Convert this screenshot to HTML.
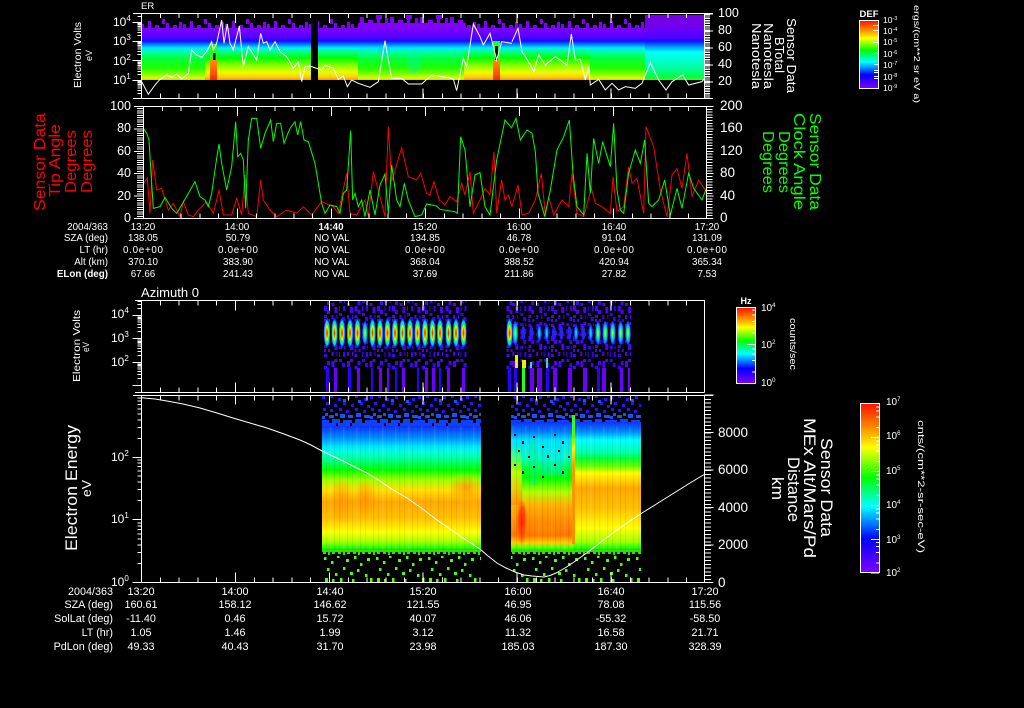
<!DOCTYPE html>
<html><head><meta charset="utf-8"><title>Sensor Data</title>
<style>
html,body{margin:0;padding:0;background:#000;width:1024px;height:708px;overflow:hidden}
svg{display:block}
text{font-family:"Liberation Sans",sans-serif;fill:#fff}
.ax{shape-rendering:crispEdges}
.c text{text-anchor:middle}
.e text{text-anchor:end}
</style></head>
<body>
<svg xmlns="http://www.w3.org/2000/svg" width="1024" height="708" viewBox="0 0 1024 708">
<defs>
<linearGradient id="gA" gradientUnits="userSpaceOnUse" x1="0" y1="0" x2="0" y2="1000">
<stop offset=".028" stop-color="#7f00ff"/><stop offset=".038" stop-color="#5000ff"/><stop offset=".041" stop-color="#1010ff"/><stop offset=".045" stop-color="#0090ff"/><stop offset=".048" stop-color="#00f0ee"/><stop offset=".052" stop-color="#00ff80"/><stop offset=".058" stop-color="#00ff00"/><stop offset=".066" stop-color="#90ff00"/><stop offset=".072" stop-color="#e8ff00"/><stop offset=".077" stop-color="#ffd000"/><stop offset=".080" stop-color="#ff9000"/></linearGradient>
<linearGradient id="gB" gradientUnits="userSpaceOnUse" x1="0" y1="0" x2="0" y2="1000">
<stop offset=".028" stop-color="#7f00ff"/><stop offset=".038" stop-color="#5000ff"/><stop offset=".041" stop-color="#1010ff"/><stop offset=".045" stop-color="#0090ff"/><stop offset=".048" stop-color="#00e8ff"/><stop offset=".052" stop-color="#00ffa0"/><stop offset=".058" stop-color="#00ff40"/><stop offset=".068" stop-color="#20ff00"/><stop offset=".074" stop-color="#80ff00"/><stop offset=".078" stop-color="#d0ff00"/><stop offset=".080" stop-color="#ffc000"/></linearGradient>
<linearGradient id="gC" gradientUnits="userSpaceOnUse" x1="0" y1="0" x2="0" y2="1000">
<stop offset=".020" stop-color="#7f00ff"/><stop offset=".038" stop-color="#5000ff"/><stop offset=".041" stop-color="#1010ff"/><stop offset=".047" stop-color="#00a0ff"/><stop offset=".052" stop-color="#00ffff"/><stop offset=".068" stop-color="#00ffa0"/><stop offset=".077" stop-color="#00ff40"/><stop offset=".080" stop-color="#40ff00"/></linearGradient>
<linearGradient id="gL" gradientUnits="userSpaceOnUse" x1="0" y1="0" x2="0" y2="1000">
<stop offset=".426" stop-color="#1030ff"/><stop offset=".438" stop-color="#0090ff"/><stop offset=".446" stop-color="#00e0ff"/><stop offset=".452" stop-color="#00ffe0"/><stop offset=".462" stop-color="#00ff70"/><stop offset=".470" stop-color="#00ff00"/><stop offset=".480" stop-color="#a0ff00"/><stop offset=".490" stop-color="#ffe000"/><stop offset=".502" stop-color="#ffa800"/><stop offset=".518" stop-color="#ffc000"/><stop offset=".532" stop-color="#ffff00"/><stop offset=".542" stop-color="#a0ff00"/><stop offset=".548" stop-color="#20ff00"/><stop offset=".550" stop-color="#00e000"/></linearGradient>
<linearGradient id="gR1" gradientUnits="userSpaceOnUse" x1="0" y1="0" x2="0" y2="1000">
<stop offset=".422" stop-color="#1030ff"/><stop offset=".432" stop-color="#0080ff"/><stop offset=".440" stop-color="#00e0ff"/><stop offset=".458" stop-color="#00ffc0"/><stop offset=".468" stop-color="#00ff40"/><stop offset=".478" stop-color="#00ff00"/><stop offset=".492" stop-color="#b0ff00"/><stop offset=".505" stop-color="#ffb000"/><stop offset=".520" stop-color="#ff9000"/><stop offset=".535" stop-color="#ff7000"/><stop offset=".543" stop-color="#ffd000"/><stop offset=".547" stop-color="#60ff00"/><stop offset=".550" stop-color="#00ff00"/></linearGradient>
<linearGradient id="gR2" gradientUnits="userSpaceOnUse" x1="0" y1="0" x2="0" y2="1000">
<stop offset=".422" stop-color="#1030ff"/><stop offset=".432" stop-color="#0090ff"/><stop offset=".440" stop-color="#00ffff"/><stop offset=".452" stop-color="#00ffb0"/><stop offset=".458" stop-color="#00ff40"/><stop offset=".466" stop-color="#60ff00"/><stop offset=".473" stop-color="#ffff00"/><stop offset=".488" stop-color="#ffa800"/><stop offset=".508" stop-color="#ffc000"/><stop offset=".528" stop-color="#ffff00"/><stop offset=".542" stop-color="#a0ff00"/><stop offset=".548" stop-color="#20ff00"/><stop offset=".550" stop-color="#00e000"/></linearGradient>
<linearGradient id="cb" x1="0" y1="0" x2="0" y2="1">
<stop offset="0" stop-color="#ff1000"/><stop offset=".13" stop-color="#ff8000"/><stop offset=".26" stop-color="#ffff00"/><stop offset=".44" stop-color="#00ff00"/><stop offset=".61" stop-color="#00ffff"/><stop offset=".80" stop-color="#0000ff"/><stop offset="1" stop-color="#7f00ff"/></linearGradient>
<linearGradient id="hot" x1="0" y1="0" x2="0" y2="1">
<stop offset="0" stop-color="#ff9000"/><stop offset=".7" stop-color="#ff5000"/><stop offset="1" stop-color="#ff2000"/></linearGradient>
<linearGradient id="fadeO" x1="0" y1="0" x2="0" y2="1">
<stop offset="0" stop-color="#a0ff00" stop-opacity="0"/><stop offset=".45" stop-color="#e0ff00" stop-opacity=".8"/><stop offset="1" stop-color="#ff9000"/></linearGradient>
<linearGradient id="stripe" x1="0" y1="0" x2="0" y2="1">
<stop offset="0" stop-color="#20ff40"/><stop offset=".17" stop-color="#60ff00"/><stop offset=".25" stop-color="#ffff00"/><stop offset=".4" stop-color="#ffa000"/><stop offset="1" stop-color="#ff9000"/></linearGradient>
<radialGradient id="pu">
<stop offset="0" stop-color="#ff0000"/><stop offset=".28" stop-color="#ff9000"/><stop offset=".45" stop-color="#e0ff00"/><stop offset=".6" stop-color="#00ff40"/><stop offset=".75" stop-color="#00e0ff"/><stop offset=".9" stop-color="#0040ff"/><stop offset="1" stop-color="#3000ff"/></radialGradient>
<radialGradient id="pw">
<stop offset="0" stop-color="#00ffb0"/><stop offset=".4" stop-color="#00b0ff"/><stop offset=".75" stop-color="#0040ff"/><stop offset="1" stop-color="#3000ff"/></radialGradient>
<radialGradient id="pg">
<stop offset="0" stop-color="#d0ff00"/><stop offset=".35" stop-color="#20ff60"/><stop offset=".7" stop-color="#00a0ff"/><stop offset="1" stop-color="#3000ff"/></radialGradient>
<radialGradient id="rd"><stop offset="0" stop-color="#ff2000"/><stop offset=".6" stop-color="#ff5000"/><stop offset="1" stop-color="#ff8000" stop-opacity="0"/></radialGradient>
<radialGradient id="or"><stop offset="0" stop-color="#ff9000" stop-opacity=".75"/><stop offset="1" stop-color="#ff9000" stop-opacity="0"/></radialGradient>
<pattern id="sP" patternUnits="userSpaceOnUse" width="42" height="15" x="141" y="13">
<rect x="0" y="11" width="3" height="4" fill="#7f00ff"/><rect x="7" y="8" width="3" height="7" fill="#7f00ff"/><rect x="14" y="12" width="4" height="3" fill="#7f00ff"/><rect x="21" y="6" width="3" height="5" fill="#7f00ff"/><rect x="25" y="10" width="3" height="5" fill="#7f00ff"/><rect x="32" y="12" width="4" height="3" fill="#7f00ff"/><rect x="38" y="9" width="3" height="6" fill="#7f00ff"/></pattern>
<pattern id="sQ" patternUnits="userSpaceOnUse" width="30" height="14" x="358" y="14">
<rect x="0" y="9" width="30" height="5" fill="#7f00ff"/><rect x="2" y="3" width="4" height="6" fill="#7f00ff"/><rect x="10" y="6" width="5" height="3" fill="#7f00ff"/><rect x="18" y="1" width="6" height="4" fill="#7f00ff"/><rect x="19" y="5" width="3" height="4" fill="#7f00ff"/><rect x="27" y="4" width="3" height="5" fill="#7f00ff"/></pattern>
<pattern id="sB" patternUnits="userSpaceOnUse" width="48" height="33" x="322" y="395">
<path fill="#2a10ff" d="M0 1h3v3h-3zM8 0h3v3h-3zM16 3h3v3h-3zM25 1h3v3h-3zM33 0h3v3h-3zM42 3h3v3h-3zM4 7h3v3h-3zM12 9h3v3h-3zM21 7h3v3h-3zM29 9h3v3h-3zM38 7h3v3h-3zM45 10h3v3h-3zM1 13h3v3h-3zM8 14h3v3h-3zM17 13h3v3h-3zM24 15h3v3h-3zM33 13h3v3h-3zM41 15h3v3h-3z"/>
<path fill="#1850ff" d="M3 18h3v3h-3zM7 20h5v3h-5zM13 18h3v3h-3zM18 19h5v4h-5zM26 20h5v3h-5zM34 18h5v4h-5zM42 20h6v3h-6zM0 21h3v3h-3zM21 4h3v3h-3zM36 5h3v3h-3z"/>
<path fill="#1040ff" d="M0 25h7v3h-7zM10 24h8v4h-8zM21 25h9v3h-9zM33 24h7v4h-7zM43 25h5v3h-5zM0 28h14v5h-14zM16 28h12v5h-12zM30 28h18v5h-18z"/></pattern>
<pattern id="sG" patternUnits="userSpaceOnUse" width="52" height="32" x="322" y="550">
<path fill="#50ff00" d="M2 7h2.5v3h-2.5zM9 11h2.5v3h-2.5zM15 5h2.5v3h-2.5zM24 9h3v3h-3zM32 6h2.5v3h-2.5zM38 13h2.5v3h-2.5zM45 8h3v3h-3zM5 18h2.5v3h-2.5zM13 23h2.5v3h-2.5zM21 17h2.5v3h-2.5zM28 22h3v3h-3zM35 19h2.5v3h-2.5zM43 24h2.5v3h-2.5zM3 28h3v4h-3zM18 28h2.5v4h-2.5zM30 29h2.5v3h-2.5zM48 28h2.5v4h-2.5zM10 29h2.5v3h-2.5z"/></pattern>
<pattern id="sD" patternUnits="userSpaceOnUse" width="15" height="6" x="322" y="550">
<path fill="#30e000" d="M0 0h15v2h-15zM1 2h3v2h-3zM6 2h2v3h-2zM10 2h3v2h-3z"/></pattern>
<pattern id="n1" patternUnits="userSpaceOnUse" width="6" height="30" x="0" y="301">
<path fill="#4a00ff" d="M0 0h3v4h-3zM3 5h3v5h-3zM0 9h3v4h-3zM3 14h3v3h-3zM1 18h4v3h-4zM3 23h3v3h-3z"/></pattern>
<pattern id="n2" patternUnits="userSpaceOnUse" width="6" height="37" x="0" y="303">
<path fill="#5000ff" d="M3 0h3v3h-3zM0 4h3v6h-3zM2 12h3v4h-3zM0 19h3v3h-3zM3 21h3v6h-3zM0 30h4v3h-4z"/></pattern>
<pattern id="n3" patternUnits="userSpaceOnUse" width="6" height="23" x="0" y="306">
<path fill="#3c00ff" d="M1 0h3v5h-3zM3 7h3v3h-3zM0 11h3v4h-3zM2 17h4v3h-4z"/></pattern>
<pattern id="sK" patternUnits="userSpaceOnUse" width="40" height="30" x="511" y="432">
<path fill="#000" d="M3 2h2v2h-2zM11 9h2v3h-2zM22 4h2v2h-2zM31 14h2v2h-2zM7 18h2v2h-2zM17 24h2v2h-2zM36 23h2v3h-2z"/></pattern>
<pattern id="st" patternUnits="userSpaceOnUse" width="13" height="10">
<rect x="1" width="1.2" height="10" fill="#000" opacity=".06"/><rect x="5" width="1.5" height="10" fill="#fff" opacity=".08"/><rect x="9" width="1.2" height="10" fill="#000" opacity=".07"/></pattern>
<path id="lt" d="M-4 -30.1h4M-4 -47.7h4M-4 -60.2h4M-4 -69.9h4M-4 -77.8h4M-4 -84.5h4M-4 -90.3h4M-4 -95.4h4M-9 0h9" fill="none" stroke="#fff" vector-effect="non-scaling-stroke"/>
<path id="lc" d="M-3 -30.1h3M-3 -60.2h3M-3 -77.8h3M-3 -90.3h3M-8 0h8" fill="none" stroke="#fff" vector-effect="non-scaling-stroke"/>
<clipPath id="c1"><rect x="120" y="13" width="30" height="86"/></clipPath>
<clipPath id="c3"><rect x="120" y="300" width="30" height="93"/></clipPath>
<clipPath id="c4"><rect x="120" y="395" width="30" height="188"/></clipPath>
<g id="n1r"><rect x="-3" y="301" width="6" height="68" fill="url(#n1)"/></g>
<g id="n2r"><rect x="-3" y="301" width="6" height="68" fill="url(#n2)"/></g>
<g id="n3r"><rect x="-3" y="301" width="6" height="68" fill="url(#n3)"/></g>
<ellipse id="P" cx="0" cy="333" rx="3.2" ry="15" fill="url(#pu)"/>
<ellipse id="W" cx="0" cy="333" rx="2.2" ry="9" fill="url(#pw)"/>
<ellipse id="V" cx="0" cy="333" rx="2.8" ry="12" fill="url(#pg)"/>
<ellipse id="B" cx="0" cy="333" rx="2" ry="7" fill="#2a20ff"/>
</defs>
<rect width="1024" height="708" fill="#000"/>

<!-- panel 1 spectrogram -->
<rect x="141" y="13" width="170" height="15" fill="url(#sP)"/>
<rect x="318" y="13" width="40" height="15" fill="url(#sP)"/>
<rect x="358" y="14" width="108" height="14" fill="url(#sQ)"/>
<rect x="466" y="13" width="179" height="15" fill="url(#sP)"/>
<rect x="645" y="15" width="59" height="13" fill="#7f00ff" opacity=".9"/>
<rect x="141" y="28" width="64" height="52" fill="url(#gB)"/>
<rect x="205" y="28" width="106" height="52" fill="url(#gA)"/>
<rect x="318" y="28" width="40" height="52" fill="url(#gA)"/>
<rect x="358" y="28" width="106" height="52" fill="url(#gB)"/>
<rect x="464" y="28" width="126" height="52" fill="url(#gA)"/>
<rect x="590" y="28" width="55" height="52" fill="url(#gB)"/>
<rect x="645" y="28" width="59" height="52" fill="url(#gC)"/>
<ellipse cx="414" cy="62" rx="7" ry="12" fill="#00f0c0" opacity=".35"/>
<ellipse cx="384" cy="50" rx="6" ry="5" fill="#00c0ff" opacity=".4"/>
<rect x="210" y="44" width="7" height="16" fill="#20ff20"/>
<rect x="210" y="60" width="7" height="20" fill="url(#hot)"/>
<rect x="213" y="53" width="2.5" height="7" fill="#000"/>
<rect x="493" y="41" width="7" height="19" fill="#20ff20"/>
<rect x="493" y="60" width="7" height="20" fill="url(#hot)"/>
<rect x="495" y="46" width="3" height="14" fill="#000"/>
<g fill="none" stroke="#fff" stroke-width="1">
<polyline vector-effect="non-scaling-stroke" transform="scale(.33333)" points="425,245 445,283 465,255 480,238 500,225 515,232 530,222 545,237 565,220 575,150 590,165 605,172 620,155 635,125 640,150 650,130 665,60 672,130 682,72 690,130 700,150 718,78 730,200 745,140 770,180 782,100 790,130 800,125 810,150 825,125 840,155 860,170 880,205 895,185 905,245 915,200 935,200 965,210 975,195 1000,205 1015,238 1030,228 1042,260 1055,240 1075,250 1110,262 1135,245 1155,122 1175,235 1205,235 1225,252 1265,252 1295,225 1340,232 1360,237 1370,272 1390,175 1400,200 1420,72 1440,110 1450,135 1470,100 1490,180 1505,125 1536,130"/>
<polyline vector-effect="non-scaling-stroke" transform="translate(512,0) scale(.33333)" points="0,125 18,85 30,155 45,178 65,215 80,165 100,195 130,170 165,195 178,102 190,180 205,178 220,240 230,200 235,255 260,238 280,270 300,250 320,270 340,260 370,265 390,250 415,188 440,240 462,270 480,245 512,225 530,255 570,245 578,235"/>
</g>

<!-- panel 2 lines -->
<g fill="none" stroke-width="1">
<polyline stroke="#ff0000" vector-effect="non-scaling-stroke" transform="translate(0,100) scale(.33333)" points="430,250 442,235 450,340 458,180 470,270 485,265 505,330 520,310 540,350 550,305 565,345 580,350 595,330 620,305 640,340 657,270 670,345 695,345 710,295 725,345 735,225 745,340 770,350 782,240 790,300 810,330 830,350 860,330 890,340 910,320 935,345 965,305 1000,320 1015,340 1040,220 1050,340 1070,345 1095,300 1105,350 1120,215 1140,290 1155,350 1165,80 1175,245 1205,143 1225,230 1250,240 1262,220 1280,280 1290,285 1302,245 1318,300 1335,315 1350,290 1370,305 1385,250 1395,285 1410,215 1420,340 1440,300 1455,265 1470,285 1482,155 1490,340 1505,240 1515,300 1525,285 1536,320"/>
<polyline stroke="#ff0000" vector-effect="non-scaling-stroke" transform="translate(512,100) scale(.33333)" points="0,320 18,255 30,345 50,340 70,300 88,220 100,345 110,290 125,345 150,300 170,320 180,220 195,340 215,350 238,265 250,310 270,320 295,340 303,230 315,335 335,320 350,200 360,250 375,235 395,340 402,80 425,140 445,270 465,350 480,225 495,205 510,265 525,160 540,290 560,240 583,275"/>
<polyline stroke="#00ff00" vector-effect="non-scaling-stroke" transform="translate(0,100) scale(.33333)" points="430,85 440,100 447,120 453,220 460,325 480,320 495,292 515,325 530,340 545,315 565,280 585,245 600,290 615,300 625,320 635,280 650,175 657,132 665,190 680,270 695,200 707,65 713,170 722,160 730,180 737,325 745,120 755,55 770,55 782,145 795,100 812,60 820,125 830,70 842,70 852,130 870,85 885,65 893,105 902,65 912,120 925,125 945,190 965,310 975,340 990,315 1010,320 1020,340 1030,280 1040,270 1052,92 1058,300 1065,280 1075,320 1085,300 1095,350 1110,270 1125,345 1140,255 1155,222 1165,340 1175,195 1190,300 1200,320 1213,250 1225,300 1245,350 1265,345 1280,312 1310,318 1320,328 1365,335 1372,340 1382,110 1395,150 1410,320 1425,225 1440,218 1455,320 1470,345 1490,180 1515,60 1536,85"/>
<polyline stroke="#00ff00" vector-effect="non-scaling-stroke" transform="translate(512,100) scale(.33333)" points="0,80 12,55 25,120 45,90 60,100 70,155 78,280 90,320 98,350 115,270 135,150 155,110 172,60 183,220 195,320 215,345 225,160 235,280 245,115 260,190 272,125 295,200 305,70 315,270 325,330 335,340 350,220 370,150 385,190 398,120 410,310 420,320 440,300 458,240 475,345 495,265 510,325 530,220 545,265 570,300 583,265"/>
</g>

<!-- panel 3 pulses -->
<g transform="translate(327,0)"><use href="#n1r"/><use href="#P"/></g>
<g transform="translate(334.5,0)"><use href="#n2r"/><use href="#P"/></g>
<g transform="translate(342,0)"><use href="#n3r"/><use href="#P"/></g>
<g transform="translate(350,0)"><use href="#n2r"/><use href="#P"/></g>
<g transform="translate(357.5,0)"><use href="#n1r"/><use href="#P"/></g>
<g transform="translate(365,0)"><use href="#n3r"/><use href="#V"/></g>
<g transform="translate(372.5,0)"><use href="#n2r"/><use href="#P"/></g>
<g transform="translate(380,0)"><use href="#n1r"/><use href="#P"/></g>
<g transform="translate(387.5,0)"><use href="#n3r"/><use href="#P"/></g>
<g transform="translate(395,0)"><use href="#n1r"/><use href="#P"/></g>
<g transform="translate(402.5,0)"><use href="#n2r"/><use href="#P"/></g>
<g transform="translate(410,0)"><use href="#n3r"/><use href="#P"/></g>
<g transform="translate(417.5,0)"><use href="#n2r"/><use href="#P"/></g>
<g transform="translate(425,0)"><use href="#n1r"/><use href="#P"/></g>
<g transform="translate(432.5,0)"><use href="#n3r"/><use href="#P"/></g>
<g transform="translate(440,0)"><use href="#n2r"/><use href="#P"/></g>
<g transform="translate(448.5,0)"><use href="#n1r"/><use href="#P"/></g>
<g transform="translate(456,0)"><use href="#n2r"/><use href="#P"/></g>
<g transform="translate(463.5,0)"><use href="#n3r"/><use href="#P"/></g>
<g transform="translate(509.5,0)"><use href="#n1r"/><use href="#P"/></g>
<g transform="translate(515.3,0)"><use href="#n2r"/><use href="#V"/></g>
<g transform="translate(523.3,0)"><use href="#n3r"/><use href="#B"/></g>
<g transform="translate(531.3,0)"><use href="#n1r"/><use href="#B"/></g>
<g transform="translate(539.3,0)"><use href="#n2r"/><use href="#W"/></g>
<g transform="translate(546.7,0)"><use href="#n3r"/><use href="#W"/></g>
<g transform="translate(554,0)"><use href="#n1r"/><use href="#B"/></g>
<g transform="translate(561.3,0)"><use href="#n2r"/><use href="#B"/></g>
<g transform="translate(569.3,0)"><use href="#n3r"/><use href="#B"/></g>
<g transform="translate(576,0)"><use href="#n1r"/><use href="#W"/></g>
<g transform="translate(583.3,0)"><use href="#n2r"/><use href="#B"/></g>
<g transform="translate(590.7,0)"><use href="#n3r"/><use href="#W"/></g>
<g transform="translate(598,0)"><use href="#n1r"/><use href="#V"/></g>
<g transform="translate(605.3,0)"><use href="#n2r"/><use href="#V"/></g>
<g transform="translate(612.7,0)"><use href="#n3r"/><use href="#V"/></g>
<g transform="translate(620.7,0)"><use href="#n1r"/><use href="#V"/></g>
<g transform="translate(628,0)"><use href="#n2r"/><use href="#V"/></g>
<g class="ax">
<path fill="#2a00ff" d="M326 368h3v24h-3zM348 368h3v24h-3zM371 368h2v24h-2zM395 368h2v24h-2zM417 368h2v24h-2zM439 368h2v24h-2zM508 368h3v24h-3zM514 368h3v24h-3zM546 368h3v24h-3zM597 368h3v24h-3z"/>
<path fill="#6a00ff" d="M334 368h3v24h-3zM357 368h3v24h-3zM379 368h3v24h-3zM387 368h2v24h-2zM402 368h3v24h-3zM425 368h3v24h-3zM432 368h3v24h-3zM447 368h3v24h-3zM462 368h3v24h-3zM530 368h4v24h-4zM537 368h5v24h-5zM553 368h4v24h-4zM568 368h4v24h-4zM583 368h4v24h-4zM602 368h4v24h-4zM620 368h3v24h-3zM628 368h2v24h-2z"/>
<path fill="#20ff20" d="M522 368h3v24h-3z"/>
<path fill="#e8f000" d="M515 355h3v13h-3zM522 360h4v8h-4z"/>
<path fill="#30e0a0" d="M530 362h2v6h-2zM546 358h2v10h-2z"/>
</g>

<!-- panel 4 spectrogram -->
<rect x="322" y="395" width="159" height="33" fill="url(#sB)"/>
<rect x="322" y="426" width="159" height="124" fill="url(#gL)"/>
<ellipse cx="342" cy="501" rx="12" ry="25" fill="url(#or)"/><ellipse cx="365" cy="498" rx="12" ry="20" fill="url(#or)"/><ellipse cx="466" cy="488" rx="18" ry="14" fill="url(#or)"/>
<rect x="511" y="395" width="130" height="33" fill="url(#sB)"/>
<rect x="511" y="422" width="63" height="128" fill="url(#gR1)"/>
<rect x="574" y="422" width="67" height="128" fill="url(#gR2)"/>
<rect x="511" y="445" width="11" height="60" fill="url(#fadeO)"/>
<rect x="530" y="440" width="8" height="45" fill="#00f090" opacity=".35"/>
<rect x="541" y="445" width="22" height="30" fill="#00e0ff" opacity=".35"/>
<rect x="511" y="432" width="63" height="46" fill="url(#sK)"/>
<ellipse cx="522" cy="522" rx="6" ry="24" fill="url(#rd)"/>
<ellipse cx="545" cy="528" rx="24" ry="12" fill="url(#or)"/>
<rect x="572" y="415" width="3" height="129" fill="url(#stripe)"/>
<rect x="322" y="426" width="159" height="124" fill="url(#st)"/>
<rect x="511" y="426" width="130" height="124" fill="url(#st)"/>
<rect x="322" y="550" width="159" height="6" fill="url(#sD)"/>
<rect x="511" y="550" width="130" height="6" fill="url(#sD)"/>
<rect x="322" y="556" width="159" height="26" fill="url(#sG)"/>
<rect x="511" y="556" width="130" height="26" fill="url(#sG)"/>
<polyline fill="none" stroke="#fff" stroke-width="1" points="141.7,397.7 155,399 167,401 183,404 200,408 217,413 233,418 250,423 267,428 284,434 300,440 311,445 322,451 343,461 355,467 367,473 380,481 393,490 407,498 420,507 433,517 447,527 463,538 480,549 488,556 497,563 506,568 515,572 524,575 532,576 544,577 550,575.5 556,573 565,568 574,562 588,552 601,542 621,527 642,513 658,503 674,493 690,483 705,474"/>

<!-- axes -->
<g class="ax" fill="none" stroke="#fff" stroke-width="1">
<!-- p1 -->
<path d="M133 13.5H713M133 98.5H713M141.5 13V98M704.5 13V98"/>
<line x1="141" x2="705" y1="15.5" y2="15.5" stroke-width="5" stroke-dasharray="1 17.8"/>
<line x1="141" x2="705" y1="18" y2="18" stroke-width="10" stroke-dasharray="1 92.9"/>
<line x1="141" x2="705" y1="96" y2="96" stroke-width="5" stroke-dasharray="1 17.8"/>
<line x1="141" x2="705" y1="93.5" y2="93.5" stroke-width="10" stroke-dasharray="1 92.9"/>
<line x1="707.5" x2="707.5" y1="13" y2="98" stroke-width="5" stroke-dasharray="1 .7"/>
<line x1="709" x2="709" y1="13.5" y2="98" stroke-width="8" stroke-dasharray="1 16"/>
<!-- p2 -->
<path d="M134 106.5H713M134 218.5H713M143.5 106V218M706.5 106V218"/>
<line x1="143" x2="707" y1="108.5" y2="108.5" stroke-width="5" stroke-dasharray="1 17.8"/>
<line x1="143" x2="707" y1="111" y2="111" stroke-width="10" stroke-dasharray="1 93"/>
<line x1="143" x2="707" y1="216" y2="216" stroke-width="5" stroke-dasharray="1 17.8"/>
<line x1="143" x2="707" y1="213.5" y2="213.5" stroke-width="10" stroke-dasharray="1 93"/>
<line x1="140" x2="140" y1="106" y2="218" stroke-width="6" stroke-dasharray="1 1.24"/>
<line x1="138.5" x2="138.5" y1="106" y2="218.5" stroke-width="9" stroke-dasharray="1 21.4"/>
<line x1="709.5" x2="709.5" y1="106" y2="218" stroke-width="6" stroke-dasharray="1 1.8"/>
<line x1="710" x2="710" y1="106" y2="218.5" stroke-width="7" stroke-dasharray="1 21.4"/>
<!-- p3 -->
<path d="M135 300.5H704.5M135 392.5H704.5M141.5 300V392M704.5 300V392"/>
<line x1="141" x2="705" y1="303" y2="303" stroke-width="5" stroke-dasharray="1 17.8"/>
<line x1="141" x2="705" y1="305.5" y2="305.5" stroke-width="10" stroke-dasharray="1 92.9"/>
<line x1="141" x2="705" y1="390" y2="390" stroke-width="5" stroke-dasharray="1 17.8"/>
<line x1="141" x2="705" y1="387.5" y2="387.5" stroke-width="10" stroke-dasharray="1 92.9"/>
<!-- p4 -->
<path d="M133 395.5H713M133 582.5H713M141.5 395V582M704.5 395V582"/>
<line x1="141" x2="705" y1="398" y2="398" stroke-width="5" stroke-dasharray="1 17.8"/>
<line x1="141" x2="705" y1="400" y2="400" stroke-width="9" stroke-dasharray="1 92.9"/>
<line x1="141" x2="705" y1="580" y2="580" stroke-width="5" stroke-dasharray="1 17.8"/>
<line x1="141" x2="705" y1="577.5" y2="577.5" stroke-width="10" stroke-dasharray="1 92.9"/>
<line x1="708" x2="708" y1="395" y2="582.5" stroke-width="6" stroke-dasharray="1 2.75"/>
<line x1="709" x2="709" y1="394.5" y2="582.5" stroke-width="9" stroke-dasharray="1 36.5"/>
</g>
<g class="ax">
<g clip-path="url(#c1)">
<use href="#lt" transform="translate(141.5,99.5) scale(1,.193)"/><use href="#lt" transform="translate(141.5,80.5) scale(1,.193)"/><use href="#lt" transform="translate(141.5,60.5) scale(1,.193)"/><use href="#lt" transform="translate(141.5,41.5) scale(1,.193)"/><use href="#lt" transform="translate(141.5,22.5) scale(1,.193)"/>
</g>
<g clip-path="url(#c3)">
<use href="#lt" transform="translate(141.5,385.5) scale(1,.235)"/><use href="#lt" transform="translate(141.5,362.5) scale(1,.235)"/><use href="#lt" transform="translate(141.5,338.5) scale(1,.235)"/><use href="#lt" transform="translate(141.5,315.5) scale(1,.235)"/>
</g>
<g clip-path="url(#c4)">
<use href="#lt" transform="translate(141.5,582.5) scale(1,.625)"/><use href="#lt" transform="translate(141.5,519.5) scale(1,.625)"/><use href="#lt" transform="translate(141.5,457.5) scale(1,.625)"/>
</g>
</g>

<!-- colour bars -->
<rect x="859.5" y="20.5" width="19" height="68" fill="url(#cb)" stroke="#fff"/>
<rect x="736.5" y="307.5" width="19" height="76" fill="url(#cb)" stroke="#fff"/>
<rect x="860.5" y="403.5" width="19" height="169" fill="url(#cb)" stroke="#fff"/>
<g class="ax">
<path fill="none" stroke="#fff" d="M873 25.5h5M873 30.5h5M873 42.5h5M874 53.5h4M874 64.5h4M874 70.5h4M874 72.5h4M874 76.5h4M874 78.5h4"/>
<use href="#lc" transform="translate(755,344.5) scale(1,.38)"/><use href="#lc" transform="translate(755,383.5) scale(1,.38)"/>
<use href="#lc" transform="translate(879,437.5) scale(1,.34)"/><use href="#lc" transform="translate(879,471.5) scale(1,.34)"/><use href="#lc" transform="translate(879,505.5) scale(1,.34)"/><use href="#lc" transform="translate(879,539.5) scale(1,.34)"/><use href="#lc" transform="translate(879,573) scale(1,.34)"/>
</g>

<!-- tick labels -->
<g font-size="12">
<text x="113" y="26">10<tspan font-size="8" dy="-5">4</tspan></text>
<text x="113" y="45">10<tspan font-size="8" dy="-5">3</tspan></text>
<text x="113" y="65">10<tspan font-size="8" dy="-5">2</tspan></text>
<text x="113" y="84">10<tspan font-size="8" dy="-5">1</tspan></text>
<text x="111" y="318">10<tspan font-size="8" dy="-5">4</tspan></text>
<text x="111" y="342">10<tspan font-size="8" dy="-5">3</tspan></text>
<text x="111" y="366">10<tspan font-size="8" dy="-5">2</tspan></text>
<text x="111" y="461">10<tspan font-size="8" dy="-5">2</tspan></text>
<text x="111" y="523">10<tspan font-size="8" dy="-5">1</tspan></text>
<text x="111" y="586">10<tspan font-size="8" dy="-5">0</tspan></text>
</g>
<g class="e" font-size="12.5">
<text x="131" y="110">100</text><text x="131" y="132">80</text><text x="131" y="155">60</text><text x="131" y="177">40</text><text x="131" y="200">20</text><text x="131" y="222">0</text>
</g>
<g font-size="12.5">
<text x="718" y="17">100</text><text x="718" y="34">80</text><text x="718" y="51">60</text><text x="718" y="68">40</text><text x="718" y="85">20</text>
</g>
<g font-size="13.5">
<text x="720" y="110">200</text><text x="720" y="132">160</text><text x="720" y="155">120</text><text x="720" y="177">80</text><text x="720" y="200">40</text><text x="720" y="222">0</text>
<text x="718" y="437">8000</text><text x="718" y="474">6000</text><text x="718" y="512">4000</text><text x="718" y="549">2000</text><text x="718" y="587">0</text>
</g>

<!-- top colourbar labels -->
<text x="869" y="17" font-size="9.5" font-weight="bold" text-anchor="middle">DEF</text>
<g font-size="8.5">
<text x="883" y="23">10<tspan font-size="5.5" dy="-3">-3</tspan></text>
<text x="883" y="34">10<tspan font-size="5.5" dy="-3">-4</tspan></text>
<text x="883" y="45">10<tspan font-size="5.5" dy="-3">-5</tspan></text>
<text x="883" y="57">10<tspan font-size="5.5" dy="-3">-6</tspan></text>
<text x="883" y="68">10<tspan font-size="5.5" dy="-3">-7</tspan></text>
<text x="883" y="80">10<tspan font-size="5.5" dy="-3">-8</tspan></text>
<text x="883" y="91">10<tspan font-size="5.5" dy="-3">-9</tspan></text>
</g>
<text transform="translate(914,5) rotate(90)" font-size="8.5" textLength="98" lengthAdjust="spacingAndGlyphs">ergs/(cm**2 sr eV a)</text>
<!-- mid colourbar labels -->
<text x="746" y="304" font-size="9" font-weight="bold" text-anchor="middle">Hz</text>
<g font-size="10">
<text x="761" y="311">10<tspan font-size="6" dy="-4">4</tspan></text>
<text x="761" y="348">10<tspan font-size="6" dy="-4">2</tspan></text>
<text x="761" y="386">10<tspan font-size="6" dy="-4">0</tspan></text>
</g>
<text transform="translate(790,318) rotate(90)" font-size="9" textLength="52" lengthAdjust="spacingAndGlyphs">counts/sec</text>
<!-- bottom colourbar labels -->
<g font-size="10">
<text x="886" y="405">10<tspan font-size="6" dy="-4">7</tspan></text>
<text x="886" y="439">10<tspan font-size="6" dy="-4">6</tspan></text>
<text x="886" y="474">10<tspan font-size="6" dy="-4">5</tspan></text>
<text x="886" y="508">10<tspan font-size="6" dy="-4">4</tspan></text>
<text x="886" y="543">10<tspan font-size="6" dy="-4">3</tspan></text>
<text x="886" y="576">10<tspan font-size="6" dy="-4">2</tspan></text>
</g>
<text transform="translate(918,420) rotate(90)" font-size="9.5" textLength="133" lengthAdjust="spacingAndGlyphs">cnts/(cm**2-sr-sec-eV)</text>

<!-- titles -->
<text x="141" y="9" font-size="9.5">ER</text>
<text x="141" y="297" font-size="12.5" textLength="58" lengthAdjust="spacingAndGlyphs">Azimuth 0</text>

<!-- rotated axis labels -->
<text transform="translate(81,88) rotate(-90)" font-size="10.5" textLength="66" lengthAdjust="spacingAndGlyphs">Electron Volts</text>
<text transform="translate(92,61) rotate(-90)" font-size="9" textLength="11" lengthAdjust="spacingAndGlyphs">eV</text>
<text transform="translate(80,382) rotate(-90)" font-size="10.5" textLength="72" lengthAdjust="spacingAndGlyphs">Electron Volts</text>
<text transform="translate(89,352) rotate(-90)" font-size="9" textLength="10" lengthAdjust="spacingAndGlyphs">eV</text>
<text transform="translate(77,551) rotate(-90)" font-size="17" textLength="126" lengthAdjust="spacingAndGlyphs">Electron Energy</text>
<text transform="translate(91,497) rotate(-90)" font-size="13" textLength="17" lengthAdjust="spacingAndGlyphs">eV</text>

<g font-size="15.5">
<text style="fill:#ff0000" transform="translate(45,211) rotate(-90)" textLength="98" lengthAdjust="spacingAndGlyphs">Sensor Data</text>
<text style="fill:#ff0000" transform="translate(60,197) rotate(-90)" textLength="73" lengthAdjust="spacingAndGlyphs">Tip Angle</text>
<text style="fill:#ff0000" transform="translate(76,193) rotate(-90)" textLength="63" lengthAdjust="spacingAndGlyphs">Degrees</text>
<text style="fill:#ff0000" transform="translate(92,193) rotate(-90)" textLength="63" lengthAdjust="spacingAndGlyphs">Degrees</text>
</g>
<g font-size="15.5">
<text style="fill:#00ff00" transform="translate(810,113) rotate(90)" textLength="97" lengthAdjust="spacingAndGlyphs">Sensor Data</text>
<text style="fill:#00ff00" transform="translate(794,113) rotate(90)" textLength="97" lengthAdjust="spacingAndGlyphs">Clock Angle</text>
<text style="fill:#00ff00" transform="translate(779,131) rotate(90)" textLength="62" lengthAdjust="spacingAndGlyphs">Degrees</text>
<text style="fill:#00ff00" transform="translate(763,131) rotate(90)" textLength="62" lengthAdjust="spacingAndGlyphs">Degrees</text>
</g>
<g font-size="13">
<text transform="translate(787,18) rotate(90)" textLength="75" lengthAdjust="spacingAndGlyphs">Sensor Data</text>
<text transform="translate(775,37) rotate(90)" textLength="36" lengthAdjust="spacingAndGlyphs">BTotal</text>
<text transform="translate(764,23) rotate(90)" textLength="66" lengthAdjust="spacingAndGlyphs">Nanotesla</text>
<text transform="translate(752,23) rotate(90)" textLength="66" lengthAdjust="spacingAndGlyphs">Nanotesla</text>
</g>
<g font-size="16.5">
<text transform="translate(821,438) rotate(90)" textLength="99" lengthAdjust="spacingAndGlyphs">Sensor Data</text>
<text transform="translate(804,418) rotate(90)" textLength="140" lengthAdjust="spacingAndGlyphs">MEx Alt/Mars/Pd</text>
<text transform="translate(788,457) rotate(90)" textLength="65" lengthAdjust="spacingAndGlyphs">Distance</text>
<text transform="translate(772,477) rotate(90)" textLength="23" lengthAdjust="spacingAndGlyphs">km</text>
</g>

<!-- upper table -->
<g class="e" font-size="9.8">
<text x="108" y="230">2004/363</text><text x="108" y="241">SZA (deg)</text><text x="108" y="253">LT (hr)</text><text x="108" y="265">Alt (km)</text><text x="108" y="277" font-weight="bold">ELon (deg)</text>
</g>
<g class="c" font-size="9.8">
<text x="143" y="230">13:20</text><text x="143" y="241">138.05</text><text x="143" y="253" textLength="40">0.0e+00</text><text x="143" y="265">370.10</text><text x="143" y="277">67.66</text>
<text x="237" y="230">14:00</text><text x="238" y="241">50.79</text><text x="238" y="253" textLength="40">0.0e+00</text><text x="238" y="265">383.90</text><text x="238" y="277">241.43</text>
<text x="331" y="230" font-weight="bold">14:40</text><text x="332" y="241">NO VAL</text><text x="332" y="253">NO VAL</text><text x="332" y="265">NO VAL</text><text x="332" y="277">NO VAL</text>
<text x="425" y="230">15:20</text><text x="425" y="241">134.85</text><text x="425" y="253" textLength="40">0.0e+00</text><text x="425" y="265">368.04</text><text x="425" y="277">37.69</text>
<text x="519" y="230">16:00</text><text x="519" y="241">46.78</text><text x="519" y="253" textLength="40">0.0e+00</text><text x="519" y="265">388.52</text><text x="519" y="277">211.86</text>
<text x="614" y="230">16:40</text><text x="614" y="241">91.04</text><text x="614" y="253" textLength="40">0.0e+00</text><text x="614" y="265">420.94</text><text x="614" y="277">27.82</text>
<text x="707" y="230">17:20</text><text x="707" y="241">131.09</text><text x="707" y="253" textLength="40">0.0e+00</text><text x="707" y="265">365.34</text><text x="707" y="277">7.53</text>
</g>

<!-- lower table -->
<g class="e" font-size="10.8">
<text x="113" y="595">2004/363</text><text x="113" y="608">SZA (deg)</text><text x="113" y="622">SolLat (deg)</text><text x="113" y="636">LT (hr)</text><text x="113" y="650">PdLon (deg)</text>
</g>
<g class="c" font-size="10.8">
<text x="141" y="595">13:20</text><text x="141" y="608">160.61</text><text x="141" y="622">-11.40</text><text x="141" y="636">1.05</text><text x="141" y="650">49.33</text>
<text x="235" y="595">14:00</text><text x="235" y="608">158.12</text><text x="235" y="622">0.46</text><text x="235" y="636">1.46</text><text x="235" y="650">40.43</text>
<text x="330" y="595">14:40</text><text x="330" y="608">146.62</text><text x="330" y="622">15.72</text><text x="330" y="636">1.99</text><text x="330" y="650">31.70</text>
<text x="423" y="595">15:20</text><text x="423" y="608">121.55</text><text x="423" y="622">40.07</text><text x="423" y="636">3.12</text><text x="423" y="650">23.98</text>
<text x="518" y="595">16:00</text><text x="518" y="608">46.95</text><text x="518" y="622">46.06</text><text x="518" y="636">11.32</text><text x="518" y="650">185.03</text>
<text x="611" y="595">16:40</text><text x="611" y="608">78.08</text><text x="611" y="622">-55.32</text><text x="611" y="636">16.58</text><text x="611" y="650">187.30</text>
<text x="705" y="595">17:20</text><text x="705" y="608">115.56</text><text x="705" y="622">-58.50</text><text x="705" y="636">21.71</text><text x="705" y="650">328.39</text>
</g>
</svg>
</body></html>
